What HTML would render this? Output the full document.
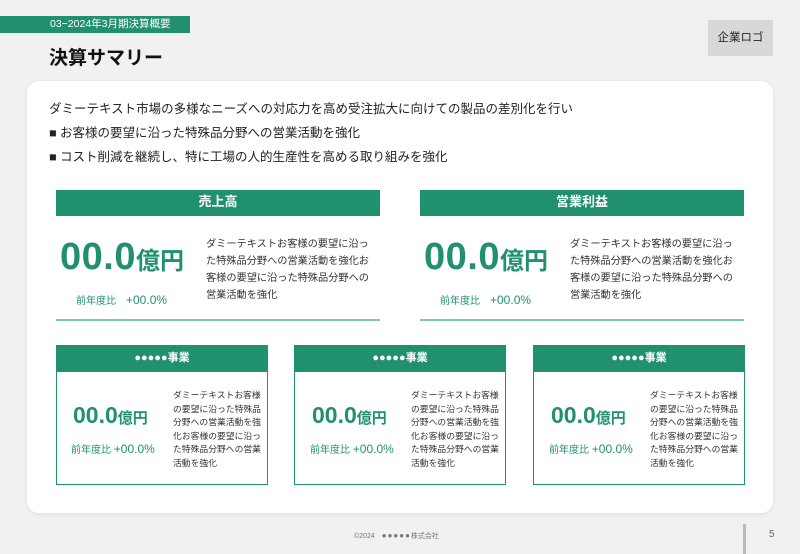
<!DOCTYPE html>
<html><head><meta charset="utf-8"><style>
*{margin:0;padding:0;box-sizing:border-box}
body{width:800px;height:554px;background:#f1f1f1;font-family:"Liberation Sans","Noto Sans CJK JP",sans-serif;position:relative;overflow:hidden;color:#222}
.a{position:absolute}
.g{background:#21906f;color:#fff;font-weight:bold;text-align:center}
.num{color:#21906f;font-weight:bold;white-space:nowrap}
.desc{font-size:10.2px;line-height:17px;color:#333}
.small{border:1.5px solid #21906f}
</style></head><body>
<div class="a" style="left:0;top:16px;width:190px;height:17px;background:#21906f;color:#fff;font-size:10.5px;line-height:17px;padding-left:50px">03−2024年3月期決算概要</div>
<div class="a" style="left:49px;top:43px;font-size:19px;font-weight:bold;color:#111">決算サマリー</div>
<div class="a" style="left:708px;top:20px;width:65px;height:36px;background:#d8d8d8;font-size:11.5px;line-height:36px;text-align:center">企業ロゴ</div>
<div class="a" style="left:27px;top:81px;width:746px;height:432px;background:#fff;border-radius:12px;box-shadow:0 1px 4px rgba(0,0,0,.08)"></div>
<div class="a" style="left:49px;top:97px;font-size:12.5px;line-height:24px;color:#222">ダミーテキスト市場の多様なニーズへの対応力を高め受注拡大に向けての製品の差別化を行い<br>■ お客様の要望に沿った特殊品分野への営業活動を強化<br>■ コスト削減を継続し、特に工場の人的生産性を高める取り組みを強化</div>

<div class="a g" style="left:56px;top:190px;width:324px;height:26px;font-size:13px;line-height:24px">売上高</div>
<div class="a num" style="left:60px;top:235px;font-size:38px;line-height:44px;letter-spacing:0.5px">00.0<span style="font-size:24px;letter-spacing:0">億円</span></div>
<div class="a" style="left:76px;top:292px;font-size:10px;color:#21906f">前年度比　<span style="font-size:12px">+00.0%</span></div>
<div class="a desc" style="left:206px;top:236px;width:168px">ダミーテキストお客様の要望に沿った特殊品分野への営業活動を強化お客様の要望に沿った特殊品分野への営業活動を強化</div>
<div class="a" style="left:56px;top:319px;width:324px;height:2px;background:#7dc7ae"></div>

<div class="a g" style="left:420px;top:190px;width:324px;height:26px;font-size:13px;line-height:24px">営業利益</div>
<div class="a num" style="left:424px;top:235px;font-size:38px;line-height:44px;letter-spacing:0.5px">00.0<span style="font-size:24px;letter-spacing:0">億円</span></div>
<div class="a" style="left:440px;top:292px;font-size:10px;color:#21906f">前年度比　<span style="font-size:12px">+00.0%</span></div>
<div class="a desc" style="left:570px;top:236px;width:168px">ダミーテキストお客様の要望に沿った特殊品分野への営業活動を強化お客様の要望に沿った特殊品分野への営業活動を強化</div>
<div class="a" style="left:420px;top:319px;width:324px;height:2px;background:#7dc7ae"></div>

<div class="a small" style="left:56px;top:345px;width:212px;height:140px"><div class="g" style="height:26px;font-size:11px;line-height:24px">●●●●●事業</div></div>
<div class="a num" style="left:73px;top:402px;font-size:23px">00.0<span style="font-size:15px">億円</span></div>
<div class="a" style="left:71px;top:441px;font-size:10px;color:#21906f">前年度比 <span style="font-size:12px">+00.0%</span></div>
<div class="a desc" style="left:173px;top:389px;width:92px;font-size:8.8px;line-height:13.5px">ダミーテキストお客様の要望に沿った特殊品分野への営業活動を強化お客様の要望に沿った特殊品分野への営業活動を強化</div>

<div class="a small" style="left:294px;top:345px;width:212px;height:140px"><div class="g" style="height:26px;font-size:11px;line-height:24px">●●●●●事業</div></div>
<div class="a num" style="left:312px;top:402px;font-size:23px">00.0<span style="font-size:15px">億円</span></div>
<div class="a" style="left:310px;top:441px;font-size:10px;color:#21906f">前年度比 <span style="font-size:12px">+00.0%</span></div>
<div class="a desc" style="left:411px;top:389px;width:92px;font-size:8.8px;line-height:13.5px">ダミーテキストお客様の要望に沿った特殊品分野への営業活動を強化お客様の要望に沿った特殊品分野への営業活動を強化</div>

<div class="a small" style="left:533px;top:345px;width:212px;height:140px"><div class="g" style="height:26px;font-size:11px;line-height:24px">●●●●●事業</div></div>
<div class="a num" style="left:551px;top:402px;font-size:23px">00.0<span style="font-size:15px">億円</span></div>
<div class="a" style="left:549px;top:441px;font-size:10px;color:#21906f">前年度比 <span style="font-size:12px">+00.0%</span></div>
<div class="a desc" style="left:650px;top:389px;width:92px;font-size:8.8px;line-height:13.5px">ダミーテキストお客様の要望に沿った特殊品分野への営業活動を強化お客様の要望に沿った特殊品分野への営業活動を強化</div>

<div class="a" style="left:354px;top:531px;font-size:7px;color:#777">©2024　<span style="font-size:8px;letter-spacing:1px">●●●●●</span>株式会社</div>
<div class="a" style="left:743px;top:524px;width:3px;height:30px;background:#bbb"></div>
<div class="a" style="left:769px;top:529px;font-size:10px;color:#666">5</div>
</body></html>
